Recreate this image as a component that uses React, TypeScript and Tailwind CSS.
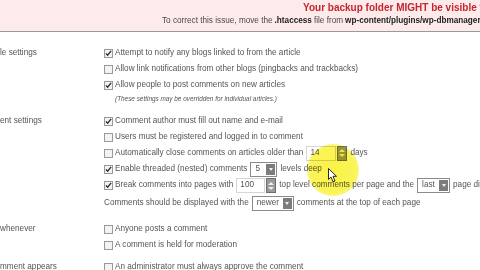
function Check({ on }: { on?: boolean }) {
  return (
    <span className="mr-[2px] flex h-[9px] w-[9px] shrink-0 items-center justify-center border border-[#999] bg-[#f3f3f3]">
      {on && (
        <svg viewBox="0 0 8 8" className="h-[7px] w-[7px]">
          <path d="M1 3.8l2 2.2 4-5" stroke="#2a2a2a" strokeWidth="1.5" fill="none" />
        </svg>
      )}
    </span>
  )
}

function Spin({ value, w }: { value: string; w: string }) {
  return (
    <span className="mx-[3px] flex items-center">
      <span className={`flex h-[15px] items-center border border-[#d6d6d6] bg-white pl-[3px] ${w}`}>{value}</span>
      <span className="ml-[1px] flex h-[15px] w-[10px] flex-col items-center justify-center gap-[2px] border border-[#6f6f6f] bg-[#9a9a9a]">
        <span className="h-0 w-0 border-x-[3px] border-b-[3px] border-x-transparent border-b-[#eee]" />
        <span className="h-0 w-0 border-x-[3px] border-t-[3px] border-x-transparent border-t-[#eee]" />
      </span>
    </span>
  )
}

function Select({ value, w }: { value: string; w: string }) {
  return (
    <span className={`mx-[3px] flex h-[15px] items-center justify-between border border-[#8a8a8a] bg-white pl-[4px] pr-[1px] ${w}`}>
      <span>{value}</span>
      <span className="flex h-[11px] w-[9px] items-center justify-center bg-[#7c7c7c]">
        <span className="h-0 w-0 border-x-[2.5px] border-t-[3px] border-x-transparent border-t-[#f0f0f0]" />
      </span>
    </span>
  )
}

function Row({ on, box = true, h = 'h-[16px]', children }: { on?: boolean; box?: boolean; h?: string; children: React.ReactNode }) {
  return (
    <div className={`flex items-center whitespace-nowrap ${h}`}>
      {box && <Check on={on} />}
      {children}
    </div>
  )
}

function Section({ label, className, children }: { label: string; className?: string; children: React.ReactNode }) {
  return (
    <div className={`flex ${className ?? ''}`}>
      <div className="flex h-[16px] w-[104px] shrink-0 items-center whitespace-nowrap">{label}</div>
      <div className="flex flex-col">{children}</div>
    </div>
  )
}

export default function App() {
  return (
    <div className="relative h-[270px] w-[480px] overflow-hidden bg-white font-['Liberation_Sans',Arial,sans-serif] text-[8.2px] text-[#555]">
      <header className="h-[32px] overflow-hidden border-b border-[#9a9a9a] bg-[#fdeaea]">
        <div className="flex h-[15px] items-center whitespace-nowrap pl-[303px] text-[10px] font-bold text-[#c4262d]">
          Your backup folder MIGHT be visible to the public
        </div>
        <div className="flex h-[12px] items-center whitespace-nowrap pl-[162px] text-[#4a4a4a]">
          To correct this issue, move the <b className="mx-[2px] text-[#222]">.htaccess</b> file from <b className="ml-[2px] text-[#222]">wp-content/plugins/wp-dbmanager</b>&nbsp;to
        </div>
      </header>

      <Section label="le settings" className="mt-[13px]">
        <Row on>Attempt to notify any blogs linked to from the article</Row>
        <Row>Allow link notifications from other blogs (pingbacks and trackbacks)</Row>
        <Row on>Allow people to post comments on new articles</Row>
        <Row box={false} h="h-[12px]">
          <span className="pl-[11px] text-[6.4px] italic">(These settings may be overridden for individual articles.)</span>
        </Row>
      </Section>

      <Section label="ent settings" className="mt-[8px]">
        <Row on>Comment author must fill out name and e-mail</Row>
        <Row>Users must be registered and logged in to comment</Row>
        <Row>
          Automatically close comments on articles older than
          <Spin value="14" w="w-[30px]" />
          days
        </Row>
        <Row on>
          Enable threaded (nested) comments
          <Select value="5" w="w-[27px]" />
          levels deep
        </Row>
        <Row on h="h-[17px]">
          Break comments into pages with
          <Spin value="100" w="w-[29px]" />
          top level comments per page and the
          <Select value="last" w="w-[33px]" />
          page displayed by default
        </Row>
        <Row box={false} h="h-[18px]">
          Comments should be displayed with the
          <Select value="newer" w="w-[42px]" />
          comments at the top of each page
        </Row>
      </Section>

      <Section label="whenever" className="mt-[9px]">
        <Row>Anyone posts a comment</Row>
        <Row>A comment is held for moderation</Row>
      </Section>

      <Section label="mment appears" className="mt-[6px]">
        <Row>An administrator must always approve the comment</Row>
      </Section>

      <div className="pointer-events-none absolute left-[307px] top-[144px] h-[52px] w-[52px] rounded-full bg-[radial-gradient(circle,rgba(250,242,60,0.95)_0%,rgba(250,242,60,0.85)_62%,rgba(250,242,60,0)_100%)] mix-blend-multiply" />
      <svg className="absolute left-[328px] top-[168px]" width="10" height="15" viewBox="0 0 10 15">
        <path d="M0.5 0.5 L0.5 11.5 L3 9 L5 13.8 L7 13 L5 8.3 L8.5 8.3 Z" fill="#fff" stroke="#111" strokeWidth="0.9" />
      </svg>
    </div>
  )
}
